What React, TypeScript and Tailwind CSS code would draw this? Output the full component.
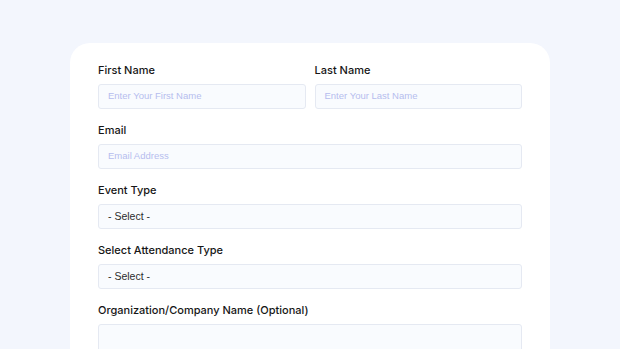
import React from "react";

function Label({ children }: { children: React.ReactNode }) {
  return (
    <div className="mb-[7px] text-[11px] leading-[13px] font-medium text-[#161616] font-['Inter',sans-serif]">
      {children}
    </div>
  );
}

function Field({ placeholder, select }: { placeholder?: string; select?: boolean }) {
  return (
    <div className="h-[25px] rounded-[3px] border border-[#e5e9f2] bg-[#f9fbfe] flex items-center pl-[9px] font-['Liberation_Sans',sans-serif]">
      {select ? (
        <span className="text-[10.5px] text-[#2c2c2c]">- Select -</span>
      ) : (
        <span className="text-[9.5px] text-[#b6bdee]">{placeholder}</span>
      )}
    </div>
  );
}

export default function App() {
  return (
    <div className="min-h-screen h-[349px] overflow-hidden bg-[#f3f6fd] flex justify-center">
      <div className="mt-[43px] w-[480px] bg-white rounded-[20px] px-[28px] pt-[21px] flex flex-col gap-[15px] h-[400px]">
        <div className="grid grid-cols-2 gap-[9px]">
          <div>
            <Label>First Name</Label>
            <Field placeholder="Enter Your First Name" />
          </div>
          <div>
            <Label>Last Name</Label>
            <Field placeholder="Enter Your Last Name" />
          </div>
        </div>
        <div>
          <Label>Email</Label>
          <Field placeholder="Email Address" />
        </div>
        <div>
          <Label>Event Type</Label>
          <Field select />
        </div>
        <div>
          <Label>Select Attendance Type</Label>
          <Field select />
        </div>
        <div>
          <Label>Organization/Company Name (Optional)</Label>
          <div className="h-[60px] rounded-[3px] border border-[#e5e9f2] bg-[#f9fbfe]" />
        </div>
      </div>
    </div>
  );
}
